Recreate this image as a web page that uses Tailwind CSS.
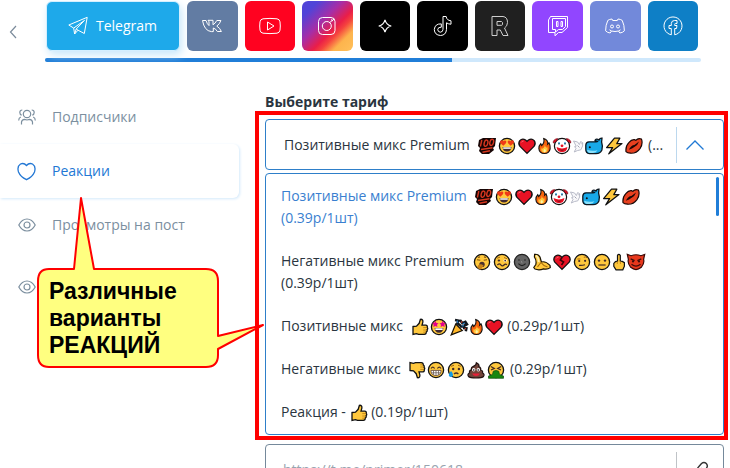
<!DOCTYPE html>
<html lang="ru">
<head>
<meta charset="utf-8">
<meta name="viewport" content="width=device-width, initial-scale=1">
<title>Выбор тарифа</title>
<script src="https://cdn.jsdelivr.net/npm/@tailwindcss/browser@4"></script>
</head>
<body class="h-screen overflow-hidden bg-white font-['Open_Sans','Noto_Sans',sans-serif] text-sm text-[#2a3540]">

<!-- Emoji sprites -->
<svg class="hidden" aria-hidden="true">
  <symbol id="e-100" viewBox="0 0 20 18">
    <path d="M2 3 L6 1 L19 1 L18 9 L16 11 L17 13 L12 17 L5 17 L2 14 L3 11 L1 9 Z" fill="#160505"/>
    <g fill="none" stroke="#d8371f" stroke-width="1.4"><path d="M4.8 3 L3.4 9.5"/><ellipse cx="9" cy="6.2" rx="1.8" ry="3.2" transform="rotate(15 9 6.2)"/><ellipse cx="14.7" cy="5.4" rx="1.8" ry="3.2" transform="rotate(15 14.7 5.4)"/><path d="M4 12.5 L15.5 10.8 M5.5 15.3 L13 13.7"/></g>
  </symbol>
  <symbol id="face" viewBox="0 0 20 18"><circle cx="10" cy="9" r="7.6" fill="#ffc83d" stroke="#111" stroke-width="1.3"/></symbol>
  <symbol id="e-love" viewBox="0 0 20 18">
    <use href="#face"/>
    <path d="M6.3 8.7 L3.2 6 Q2.6 3.6 4.5 3.3 Q5.8 3.1 6.4 4.2 Q7.6 2.8 8.9 3.8 Q9.9 5.2 8.5 6.7 Z M13.7 8.7 L16.8 6 Q17.4 3.6 15.5 3.3 Q14.2 3.1 13.6 4.2 Q12.4 2.8 11.1 3.8 Q10.1 5.2 11.5 6.7 Z" fill="#f03a17"/>
    <path d="M5.5 10 H14.5 Q14 14.6 10 14.6 Q6 14.6 5.5 10 Z" fill="#402a32"/><path d="M6.2 10.3 H13.8 V11.8 H6.2 Z" fill="#fff"/>
  </symbol>
  <symbol id="e-heart" viewBox="0 0 20 18">
    <path d="M10 16.4 L2.8 9.2 Q0.9 6.5 2.8 3.6 Q5.3 0.9 8.6 3 L10 4.4 L11.4 3 Q14.7 0.9 17.2 3.6 Q19.1 6.5 17.2 9.2 Z" fill="#e81224" stroke="#111" stroke-width="1.3"/>
    <path d="M4.2 5.5 Q5 4 6.6 4" fill="none" stroke="#f7707b" stroke-width="1"/>
  </symbol>
  <symbol id="e-broken" viewBox="0 0 20 18">
    <use href="#e-heart"/><path d="M10 4.5 L8.3 7 L11.6 9 L9.5 12" fill="none" stroke="#3a0308" stroke-width="1.5"/>
  </symbol>
  <symbol id="e-fire" viewBox="0 0 16 18">
    <path d="M7.2 1 Q12.2 2.7 11.4 7 L12.8 5.6 Q14.4 8.4 14 12 Q13 17 8 17 Q2.3 16.7 2 11.6 Q2 8.5 4 6.5 L5 8.5 Q8.4 5.5 7.2 1 Z" fill="#f7630c" stroke="#111" stroke-width="1.2"/>
    <path d="M8.4 7.5 Q8.3 9.5 10 10.8 L11 10 Q12.6 15.8 8 16 Q3.5 15.5 4.9 11 L6 12 Q8.5 10.5 8.4 7.5 Z" fill="#ffc83d"/><path d="M8.3 12 Q11 14.8 8 15.8 Q5.7 15 8.3 12 Z" fill="#fff3a8"/>
  </symbol>
  <symbol id="e-clown" viewBox="0 0 20 18">
    <circle cx="10" cy="9" r="7.6" fill="#fff" stroke="#111" stroke-width="1.2"/>
    <path d="M5.5 1.5 Q5 5 1.3 6 Q0.8 2.5 5.5 1.5 Z M14.5 1.5 Q15 5 18.7 6 Q19.2 2.5 14.5 1.5 Z" fill="#e81224" stroke="#701" stroke-width=".7"/>
    <path d="M6 6.3 H8 M12 6.3 H14" stroke="#6cc3ee" stroke-width="2.4"/><path d="M6.5 6.6 H7.5 M12.5 6.6 H13.5" stroke="#222" stroke-width="1.3"/>
    <circle cx="10" cy="8.8" r="1.4" fill="#e81224"/><path d="M4.6 10 Q10 12.8 15.4 10 Q15 15.2 10 15.2 Q5 15.2 4.6 10 Z" fill="#e81224"/><path d="M7 12.3 Q10 13.4 13 12.3 Q10 15 7 12.3" fill="#64101a"/>
  </symbol>
  <symbol id="e-dove" viewBox="0 0 12 18">
    <path d="M1.5 4 L5.6 5 L7.4 7.6 L8.6 4.6 L10.7 5.6 L10.6 9 L8.8 12.8 L5.3 13.6 L2.2 15 L4 11.5 L2.6 9.6 L4.2 9.2 Z" fill="#f8f8fa" stroke="#b9bcc9" stroke-width="1"/><path d="M5.5 8.5 L7.5 10.5 M9.5 6.7 h.8" stroke="#8b8da0" stroke-width=".8"/>
  </symbol>
  <symbol id="e-whale" viewBox="0 0 20 18">
    <path d="M1.8 8 Q2 5 5 4.8 H12 Q13.4 4.8 13.6 4.4 L11 3.6 Q11.3 1.6 14 2.4 L15 3 Q15.8 1 18 1.2 L17.6 5 Q19 9 17.9 13 Q16.3 16.7 12 16.7 H5.5 Q1.6 16.3 1.8 12 Z" fill="#18a9e8" stroke="#0c1720" stroke-width="1.3"/>
    <path d="M3 12.8 Q8 14.6 13.5 13.2 Q12 15.8 9 15.9 H5.7 Q3.5 15.6 3 12.8 Z" fill="#8be0fa"/><circle cx="5.8" cy="10.2" r="1" fill="#111"/>
  </symbol>
  <symbol id="e-bolt" viewBox="0 0 20 18">
    <path d="M10.5 1.2 H15.8 L12.8 6.6 H18 L4.8 16.8 L8.6 10.6 H2.6 Z" fill="#ffc83d" stroke="#111" stroke-width="1.3" stroke-linejoin="round"/>
  </symbol>
  <symbol id="e-lips" viewBox="0 0 20 18">
    <path d="M2 14.7 Q1.4 9 4.8 5.6 Q7.5 2.3 10.4 2.6 L11.8 3.3 Q14 0.7 17.4 2 Q19.2 6.5 16.2 11.3 Q12.4 16.6 6.5 16.2 Q3.3 16.2 2 14.7 Z" fill="#e8401f" stroke="#190806" stroke-width="1.2"/>
    <path d="M4.8 12.8 Q7.3 8.2 10.4 8 L15 4.6 Q13.6 8.7 10.7 9.8 Q8.3 12 4.8 12.8 Z" fill="#1c0705"/>
  </symbol>
  <symbol id="e-yawn" viewBox="0 0 20 18">
    <use href="#face"/><path d="M5 6.8 L8.3 7.3 M11.7 7.3 L15 6.8 M5.8 4.5 L8 3.9 M12 3.9 L14.2 4.5" stroke="#80500f" stroke-width="1.1"/><circle cx="10" cy="11.4" r="2.7" fill="#4a302d"/><path d="M5.3 14.2 Q6.2 10.5 9.2 11.3 L11.6 12.3 L9 16.5 L6.8 15.9 Z" fill="#c88218"/>
  </symbol>
  <symbol id="e-woozy" viewBox="0 0 20 18">
    <use href="#face"/><path d="M5 5.2 L8 4.2 M12 4.5 L15 5.7" stroke="#a86d12"/><ellipse cx="6.9" cy="7.6" rx="1.3" ry="1" fill="#442b24"/><ellipse cx="13.2" cy="7.6" rx="1.7" ry="1.2" fill="#fff"/><circle cx="13.2" cy="7.6" r=".9" fill="#442b24"/><path d="M5.4 12 Q7.2 9.8 8.8 11.8 T12 12 T14.8 11.8" fill="none" stroke="#442b24" stroke-width="1.3"/>
  </symbol>
  <symbol id="e-moon" viewBox="0 0 20 18">
    <circle cx="10" cy="9" r="7.6" fill="#656565" stroke="#222" stroke-width="1.3"/><path d="M7 6.3 v1.5 M13 6.3 v1.5 M6.4 10.7 Q10 14.5 13.6 10.7" fill="none" stroke="#222" stroke-width="1.2"/><path d="M9.5 8 Q9 10 10.5 9.8" fill="none" stroke="#888"/>
  </symbol>
  <symbol id="e-banana" viewBox="0 0 20 18">
    <path d="M2.6 1.4 Q6.4 1 8 4 L9.4 9 Q13.5 7.8 18 12.4 L18.3 14.6 Q15.5 16.8 11.6 15.9 Q6.8 17.6 3 16 L1.8 14.5 L3.8 11.5 Q4.8 7.5 2.4 4 Z" fill="#ffc83d" stroke="#1b1302" stroke-width="1.2"/><path d="M4 2.5 Q6.2 3.5 6.8 9" fill="none" stroke="#fff1b0" stroke-width="1.8"/><path d="M9 9.5 L5.5 13.8 M9 9.5 Q11 12.5 15.5 14" fill="none" stroke="#a86c08" stroke-width="1.1"/>
  </symbol>
  <symbol id="e-brow" viewBox="0 0 20 18">
    <use href="#face"/><path d="M5.4 6 H8.4 M11.8 4.3 Q13.5 3.3 15 4.8" fill="none" stroke="#a16312"/><circle cx="7.2" cy="8" r="1.1" fill="#442b24"/><circle cx="13.1" cy="7.8" r="1.1" fill="#442b24"/><path d="M7 12.4 Q10 12.7 13 11.8" fill="none" stroke="#442b24" stroke-width="1.2"/>
  </symbol>
  <symbol id="e-neutral" viewBox="0 0 20 18">
    <use href="#face"/><circle cx="7" cy="7.6" r="1.2" fill="#442b24"/><circle cx="13" cy="7.6" r="1.2" fill="#442b24"/><path d="M6.4 12 H13.6" stroke="#442b24" stroke-width="1.2"/>
  </symbol>
  <symbol id="e-finger" viewBox="0 0 14 18">
    <path d="M5.5 8 V2.4 Q6.8 0.4 8.3 2.4 V8 L10.3 8.4 L12.4 9.7 V13.2 L10.8 16.8 H4 L1.8 13.3 V10.4 L3.5 8.6 Z" fill="#ffc83d" stroke="#111" stroke-width="1.2"/><path d="M5.3 8.4 V11 M8.4 8.4 V11" stroke="#b77a12" stroke-width=".8"/>
  </symbol>
  <symbol id="e-devil" viewBox="0 0 20 18">
    <path d="M1.3 1.4 L5 2.7 Q10 0.8 15 2.7 L18.7 1.4 L17.6 6.3 Q18.7 10.5 15.3 14.3 Q10 18.8 4.7 14.3 Q1.3 10.5 2.4 6.3 Z" fill="#e8381c" stroke="#3a0907" stroke-width="1.2"/><path d="M4.7 5.9 L8.6 7.7 M15.3 5.9 L11.4 7.7 M5.5 11.3 Q10 14.8 14.5 11.3" fill="none" stroke="#400d0a" stroke-width="1.3"/><circle cx="7" cy="8.4" r="1.1" fill="#400d0a"/><circle cx="13" cy="8.4" r="1.1" fill="#400d0a"/>
  </symbol>
  <symbol id="e-up" viewBox="0 0 18 18">
    <path d="M2 8.5 L5.5 8.2 L8.2 5.3 L9.4 1.3 Q12.3 1 11.8 4.3 L11 7.2 H15 Q16.7 7.6 16.2 9.3 Q17.3 10.6 16 11.7 Q16.7 13.2 15.3 14 Q15.3 16.2 13.3 16.3 H7.5 L5.5 15.6 L2 16.4 Z" fill="#ffc83d" stroke="#111" stroke-width="1.3"/><path d="M12.3 9.6 H16 M12.3 12 H15.6 M12.3 14.2 H15" stroke="#b77a12" stroke-width=".8"/>
  </symbol>
  <symbol id="e-down" viewBox="0 0 18 18"><use href="#e-up" transform="translate(0 18) scale(1 -1)"/></symbol>
  <symbol id="e-star" viewBox="0 0 20 18">
    <use href="#face"/><path d="M6.5 2.8 L7.4 4.9 L9.6 5.2 L8 6.7 L8.4 9 L6.4 7.9 L4.3 8.9 L4.7 6.7 L3.1 5 L5.4 4.8 Z M13.5 2.8 L14.6 4.8 L16.9 5 L15.3 6.7 L15.7 8.9 L13.6 7.9 L11.6 9 L12 6.7 L10.4 5.2 L12.6 4.9 Z" fill="#e3008c"/><path d="M5.6 10 H14.4 Q14 14.8 10 14.8 Q6 14.8 5.6 10 Z" fill="#402a32"/><path d="M6.3 10.3 H13.7 V12 H6.3 Z" fill="#fff"/>
  </symbol>
  <symbol id="e-party" viewBox="0 0 20 18">
    <path d="M6.7 6 L13.3 12.5 L2.2 16.9 Z" fill="#ffb72a" stroke="#171005" stroke-width="1.2"/><path d="M6 2 L9.5 2.6 L8.4 5.3 L11.6 7.8 M11 2 L13.4 5.2 L16.4 3.8 L18 6.2 L14.4 8.2 L11 8.4 M14 10 L17.4 10.3 L16.8 13.2" fill="none" stroke="#10151c" stroke-width="2.5"/><path d="M8 2.6 L9 5 M13.7 5.7 L16 5 M12.8 8 L15 7.6" stroke="#2376bd" stroke-width="1.2"/><path d="M12.3 3.4 L13 4.6 M15.7 10.4 L17 11" stroke="#d93b24" stroke-width="1.2"/>
  </symbol>
  <symbol id="e-grin" viewBox="0 0 20 18">
    <use href="#face"/><path d="M5 7.5 Q6.8 4.8 8.6 7.5 M11.4 7.5 Q13.2 4.8 15 7.5" fill="none" stroke="#442b24" stroke-width="1.2"/><path d="M4.9 9.4 H15.1 Q15 14.5 10 14.5 Q5 14.5 4.9 9.4 Z" fill="#fff" stroke="#5a4038" stroke-width=".8"/><path d="M5 11.8 H15 M7.5 9.4 V13.9 M10 9.4 V14.5 M12.5 9.4 V13.9" stroke="#6b5a56" stroke-width=".8"/>
  </symbol>
  <symbol id="e-cry" viewBox="0 0 20 18">
    <use href="#face"/><path d="M5 5.3 L8 4.3 M12 4.3 L15 5.3" stroke="#a16312"/><circle cx="7.2" cy="8" r="1.2" fill="#442b24"/><circle cx="12.9" cy="8" r="1.2" fill="#442b24"/><path d="M8 13 Q10.2 11 12.4 13" fill="none" stroke="#442b24" stroke-width="1.2"/><path d="M5 10 Q8 13.3 6.5 15.3 Q4.6 16.7 3 15 Q2.2 13 5 10 Z" fill="#139be3"/>
  </symbol>
  <symbol id="e-poop" viewBox="0 0 20 18">
    <path d="M10.4 1.8 Q13.7 3.3 12.8 5.5 Q15.3 6.6 14.6 9 Q17.2 9.6 16.5 12 Q19 13.3 17.5 15.5 Q16 17 10 17 Q4 17 2.5 15.5 Q1 13.3 3.5 12 Q3 9.4 5.4 8.8 Q5 6.4 7.4 5.4 Q10.4 4.4 10.4 1.8 Z" fill="#724339" stroke="#211211" stroke-width="1.2"/><circle cx="7.7" cy="8.8" r="1.7" fill="#fff"/><circle cx="12.3" cy="8.8" r="1.7" fill="#fff"/><circle cx="7.8" cy="9" r=".8"/><circle cx="12.2" cy="9" r=".8"/><path d="M6 12.4 H14 Q12.7 15 10 15 Q7.3 15 6 12.4 Z" fill="#e81f39"/>
  </symbol>
  <symbol id="e-vomit" viewBox="0 0 20 18">
    <use href="#face"/><path d="M4.8 5.4 L8.4 7.4 L5 9 M15.2 5.4 L11.6 7.4 L15 9" fill="none" stroke="#442b24" stroke-width="1.2"/><path d="M7.3 10.2 Q10 8.8 12.7 10.2 L13.5 13.4 L17.5 15 V17.3 H2.5 V15 L6.5 13.4 Z" fill="#16870f" stroke="#0c4c0a" stroke-width=".7"/>
  </symbol>
  <symbol id="i-eye" viewBox="0 0 18 14">
    <path d="M.8 7 Q4 1 9 1 T17.2 7 Q14 13 9 13 T.8 7 Z" fill="none" stroke="currentColor" stroke-width="1.2"/><circle cx="9" cy="7" r="3" fill="none" stroke="currentColor" stroke-width="1.2"/>
  </symbol>
</svg>

<header class="flex items-start pr-[29px]">
  <button type="button" aria-label="Назад" class="mt-[24px] flex w-[45px] shrink-0 pl-2">
    <svg class="h-4 w-2.5" viewBox="0 0 10 16" fill="none" stroke="#7b8b9b" stroke-width="1.2"><path d="M8 2 L2.5 8 L8 14"/></svg>
  </button>
  <div class="min-w-0 grow">
    <nav aria-label="Социальные сети" class="flex gap-[7px] pt-px pr-[3px] pl-px text-white">
      <a href="#" class="flex h-[50px] w-[134px] items-center gap-2 rounded-md border border-[#d3efff] bg-[#1ea9ea] pl-[21px] shadow-[2px_4px_8px_#c9e8fb]">
        <svg class="h-5 w-5 shrink-0" viewBox="0 0 20 20" fill="none" stroke="#fff" stroke-width="1"><path d="M.8 9 L19.2 1.3 L16.3 17.5 L10 14.2 L6.6 18 L5.7 12.1 Z M5.7 12.1 L16.5 4.4 L8.2 13 L6.6 18 M8.2 13 L10 14.2"/></svg>
        <span>Telegram</span>
      </a>
      <a href="#" aria-label="ВКонтакте" class="flex h-[50px] flex-1 items-center justify-center rounded-md bg-[#627ca3]">
        <svg class="h-5 w-5" viewBox="0 0 20 20" fill="none" stroke="#fff" stroke-width="1" stroke-linejoin="round"><path d="M.5 4.5 H4 Q5.3 8.4 7 9.6 V5.8 L6 4.3 H11 V8.8 Q13.3 7.4 14.8 4.5 H18.9 Q17.8 8 14.8 10.1 Q18.2 12.2 19.4 15.5 H15.3 Q14 12.8 11.3 12 V15.6 H9.3 Q2.3 14.8 .5 4.5 Z"/></svg>
      </a>
      <a href="#" aria-label="YouTube" class="flex h-[50px] flex-1 items-center justify-center rounded-md bg-[#ff0220]">
        <svg class="h-[22px] w-[22px]" viewBox="0 0 22 22" fill="none" stroke="#fff" stroke-width="1"><path d="M4 3.8 Q11 3 18 3.8 Q20.6 4.2 21 6.8 Q21.6 11 21 15.2 Q20.6 17.8 18 18.2 Q11 19 4 18.2 Q1.4 17.8 1 15.2 Q.4 11 1 6.8 Q1.4 4.2 4 3.8 Z M8.5 7 L15 11 L8.5 15 Z"/></svg>
      </a>
      <a href="#" aria-label="Instagram" class="flex h-[50px] flex-1 items-center justify-center rounded-md bg-[linear-gradient(135deg,#5044d8_16%,#a52ea8_40%,#ea1e48_59%,#f5433e_67%,#fdb44d_80%,#ffc05a_100%)]">
        <svg class="h-5 w-5" viewBox="0 0 20 20" fill="none" stroke="#fff" stroke-width="1"><rect x="1.5" y="1.5" width="16.5" height="17" rx="4"/><circle cx="9.8" cy="10" r="4.5"/><path d="M12.8 6.5 L17 3 M14 3.5 L16 5"/></svg>
      </a>
      <a href="#" aria-label="Дзен" class="flex h-[50px] flex-1 items-center justify-center rounded-md bg-black">
        <svg class="h-4 w-4" viewBox="0 0 16 16" fill="none" stroke="#fff" stroke-width="1.2"><path d="M8 1.8 Q9.2 6.8 14.2 8 Q9.2 9.2 8 14.2 Q6.8 9.2 1.8 8 Q6.8 6.8 8 1.8 Z"/></svg>
      </a>
      <a href="#" aria-label="TikTok" class="flex h-[50px] flex-1 items-center justify-center rounded-md bg-black">
        <svg class="h-[22px] w-5" viewBox="0 0 20 22" fill="none" stroke="#fff" stroke-width="1"><path d="M10 1.5 H13.2 Q13.5 5.3 18 5.8 V9.2 Q15.5 9.2 13.5 7.8 V14.5 Q13 20.3 7.5 20.5 Q1.5 20 1.3 14.5 Q2 8.5 8.3 8.9 V12.2 Q4.8 12 4.7 14.7 Q5 17 7.3 17.2 Q10 17 10 14.3 Z"/></svg>
      </a>
      <a href="#" aria-label="Rutube" class="flex h-[50px] flex-1 items-center justify-center rounded-md bg-[#202020]">
        <svg class="h-[22px] w-[18px]" viewBox="0 0 18 22" fill="none" stroke="#cfcfcf" stroke-width="1"><path d="M1 1.5 H12 Q16.5 2 16.5 7.5 Q16.3 11.5 13.5 13 L17 20.5 H12 L9.3 15 H6 V20.5 H1 Z M6 6.5 H10.5 Q12 7 11.5 9.5 Q11.3 10.3 10.5 10.3 H6 Z"/></svg>
      </a>
      <a href="#" aria-label="Twitch" class="flex h-[50px] flex-1 items-center justify-center rounded-md bg-[#9146ff]">
        <svg class="h-[22px] w-[22px]" viewBox="0 0 22 22" fill="none" stroke="#fff" stroke-width="1"><path d="M3.5 1.5 H20.5 V12.5 L15 17.5 H11.5 L8 20.8 V17.5 H1.5 V5 Z M5.5 3.5 H18.5 V11.5 L15.5 14.5 H11.5 L8.5 17 V14.5 H5.5 Z M9.5 6.5 h1.5 v5 h-1.5 Z M14 6.5 h1.5 v5 h-1.5 Z"/></svg>
      </a>
      <a href="#" aria-label="Discord" class="flex h-[50px] flex-1 items-center justify-center rounded-md bg-[#7289da]">
        <svg class="h-5 w-5" viewBox="0 0 20 20" fill="none" stroke="#fff" stroke-width="1"><path d="M7 3 Q4.5 3.2 2.8 4.4 Q.6 9 .6 14.8 Q2.5 16.8 5.2 17 L6.5 15 Q10 16 13.5 15 L14.8 17 Q17.5 16.8 19.4 14.8 Q19.4 9 17.2 4.4 Q15.5 3.2 13 3 L12.3 4.5 H7.7 Z M4.5 13.8 L6.5 15 M15.5 13.8 L13.5 15"/><circle cx="7" cy="10.5" r="1.5"/><circle cx="13" cy="10.5" r="1.5"/></svg>
      </a>
      <a href="#" aria-label="Facebook" class="flex h-[50px] flex-1 items-center justify-center rounded-md bg-[#0e7fc6]">
        <svg class="h-5 w-5" viewBox="0 0 20 20" fill="none" stroke="#fff" stroke-width="1"><path d="M8.3 18.8 A9 9 0 1 1 11.7 18.8 M8.3 18.8 V12.5 H6 V9.5 H8.3 V7.5 Q8.5 4.5 11.5 4.5 H14 V7.5 H12.5 Q11.7 7.5 11.7 8.5 V9.5 H14 L13.5 12.5 H11.7 V18.8"/></svg>
      </a>
    </nav>
    <div class="mt-[7px] h-1 overflow-hidden rounded-full bg-[#cfe8fc]"><div class="h-full w-[62%] bg-[#207ed8]"></div></div>
  </div>
</header>

<main class="flex gap-[26px] pr-[6px]">
  <nav aria-label="Категории" class="relative mt-[28px] w-[239px] shrink-0 text-[#7c8f9f]">
    <a href="#" class="flex h-[54px] items-center gap-4 pl-[18px]">
      <svg class="h-[18px] w-[18px]" viewBox="0 0 18 18" fill="none" stroke="currentColor" stroke-width="1.2"><circle cx="9" cy="6" r="3.7"/><path d="M3.5 16.5 V14 Q3.8 11.5 6.5 11.3 L9 12 L11.5 11.3 Q14.2 11.5 14.5 14 V16.5 M4.3 2 Q1.8 2 1.8 4.5 Q1.8 6.5 3.7 7.3 M13.7 2 Q16.2 2 16.2 4.5 Q16.2 6.5 14.3 7.3 M2.8 9 Q.7 9.8 .7 12.5 M15.2 9 Q17.3 9.8 17.3 12.5"/></svg>
      <span>Подписчики</span>
    </a>
    <a href="#" aria-current="page" class="flex h-[54px] items-center gap-4 rounded-r-md bg-white pl-[17px] text-[#2277d4] shadow-[1px_1px_3px_#d3e9fb]">
      <svg class="h-[19px] w-[19px]" viewBox="0 0 19 19" fill="none" stroke="currentColor" stroke-width="1.3"><path d="M9.5 17.7 Q3.5 14.8 1.5 10 Q-.2 4.5 3.5 2 Q7 .5 9.5 3.5 Q12 .5 15.5 2 Q19.2 4.5 17.5 10 Q15.5 14.8 9.5 17.7 Z"/></svg>
      <span>Реакции</span>
    </a>
    <a href="#" class="flex h-[54px] items-center gap-4 pl-[18px]">
      <svg class="h-[14px] w-[18px]"><use href="#i-eye"/></svg>
      <span>Просмотры на пост</span>
    </a>
    <a href="#" aria-label="Просмотры" class="flex h-[70px] items-center pl-[18px]">
      <svg class="h-[14px] w-[18px]"><use href="#i-eye"/></svg>
    </a>
    <!-- Callout bubble -->
    <div class="absolute top-[106px] left-[36px] z-20 h-[175px] w-[230px]">
      <svg class="absolute inset-0 h-full w-full" viewBox="0 0 230 175" fill="#ffff80" stroke="#f00" stroke-width="2" stroke-linejoin="round"><path d="M13 73 H38 L45 2 L58 73 H170 Q182 73 182 85 V140 L227 129 L182 153 V159 Q182 171 170 171 H13 Q2 171 2 159 V85 Q2 73 13 73 Z"/></svg>
      <p class="relative pt-[82px] pl-[13px] font-['Liberation_Sans',Arial,sans-serif] text-[23px] leading-[27px] font-bold text-black">Различные<br>варианты<br>РЕАКЦИЙ</p>
    </div>
  </nav>

  <form class="min-w-0 grow pt-[29px]">
    <p id="tariff-label" class="leading-[22px] font-bold">Выберите тариф</p>
    <div class="relative mt-[6px]">
      <button type="button" aria-haspopup="listbox" aria-expanded="true" aria-labelledby="tariff-label" class="flex h-[51px] w-full items-center rounded border border-[#2e7fc9] bg-white pl-[18px] text-left">
        <span class="min-w-0 grow leading-[22px] whitespace-nowrap">Позитивные микс Premium <svg class="ml-1 inline-block h-[18px] w-5 align-middle"><use href="#e-100"/></svg><svg class="inline-block h-[18px] w-5 align-middle"><use href="#e-love"/></svg><svg class="inline-block h-[18px] w-5 align-middle"><use href="#e-heart"/></svg><svg class="inline-block h-[18px] w-[15px] align-middle"><use href="#e-fire"/></svg><svg class="inline-block h-[18px] w-5 align-middle"><use href="#e-clown"/></svg><svg class="inline-block h-[18px] w-3 align-middle"><use href="#e-dove"/></svg><svg class="inline-block h-[18px] w-5 align-middle"><use href="#e-whale"/></svg><svg class="inline-block h-[18px] w-5 align-middle"><use href="#e-bolt"/></svg><svg class="inline-block h-[18px] w-5 align-middle"><use href="#e-lips"/></svg> (...</span>
        <span class="flex h-9 w-[47px] shrink-0 items-center border-l border-[#bcd8ee] pl-[9px]">
          <svg class="h-3 w-[18px]" viewBox="0 0 18 12" fill="none" stroke="#2079d4" stroke-width="1.3"><path d="M.5 10.5 L9 2 L17.5 10.5"/></svg>
        </span>
      </button>
      <div class="relative mt-[3px] h-[262px] overflow-hidden rounded border border-[#2e7fc9] bg-white">
        <ul role="listbox" aria-labelledby="tariff-label" class="leading-[22px]">
          <li role="option" aria-selected="true" class="px-[15px] pt-[11px] pb-[10px] text-[#3a7fd0]">Позитивные микс Premium <svg class="ml-1 inline-block h-[18px] w-5 align-middle"><use href="#e-100"/></svg><svg class="inline-block h-[18px] w-5 align-middle"><use href="#e-love"/></svg><svg class="inline-block h-[18px] w-5 align-middle"><use href="#e-heart"/></svg><svg class="inline-block h-[18px] w-[15px] align-middle"><use href="#e-fire"/></svg><svg class="inline-block h-[18px] w-5 align-middle"><use href="#e-clown"/></svg><svg class="inline-block h-[18px] w-3 align-middle"><use href="#e-dove"/></svg><svg class="inline-block h-[18px] w-5 align-middle"><use href="#e-whale"/></svg><svg class="inline-block h-[18px] w-5 align-middle"><use href="#e-bolt"/></svg><svg class="inline-block h-[18px] w-5 align-middle"><use href="#e-lips"/></svg> (0.39р/1шт)</li>
          <li role="option" class="px-[15px] pt-[11px] pb-[10px]">Негативные микс Premium <svg class="ml-1 inline-block h-[18px] w-5 align-middle"><use href="#e-yawn"/></svg><svg class="inline-block h-[18px] w-5 align-middle"><use href="#e-woozy"/></svg><svg class="inline-block h-[18px] w-5 align-middle"><use href="#e-moon"/></svg><svg class="inline-block h-[18px] w-5 align-middle"><use href="#e-banana"/></svg><svg class="inline-block h-[18px] w-5 align-middle"><use href="#e-broken"/></svg><svg class="inline-block h-[18px] w-5 align-middle"><use href="#e-brow"/></svg><svg class="inline-block h-[18px] w-5 align-middle"><use href="#e-neutral"/></svg><svg class="inline-block h-[18px] w-3.5 align-middle"><use href="#e-finger"/></svg><svg class="inline-block h-[18px] w-5 align-middle"><use href="#e-devil"/></svg> (0.39р/1шт)</li>
          <li role="option" class="px-[15px] pt-[11px] pb-[10px]">Позитивные микс <svg class="ml-1 inline-block h-[18px] w-[18px] align-middle"><use href="#e-up"/></svg><svg class="inline-block h-[18px] w-5 align-middle"><use href="#e-star"/></svg><svg class="inline-block h-[18px] w-5 align-middle"><use href="#e-party"/></svg><svg class="inline-block h-[18px] w-[15px] align-middle"><use href="#e-fire"/></svg><svg class="inline-block h-[18px] w-5 align-middle"><use href="#e-heart"/></svg> (0.29р/1шт)</li>
          <li role="option" class="px-[15px] pt-[11px] pb-[10px]">Негативные микс <svg class="ml-1 inline-block h-[18px] w-[18px] align-middle"><use href="#e-down"/></svg><svg class="inline-block h-[18px] w-5 align-middle"><use href="#e-grin"/></svg><svg class="inline-block h-[18px] w-5 align-middle"><use href="#e-cry"/></svg><svg class="inline-block h-[18px] w-5 align-middle"><use href="#e-poop"/></svg><svg class="inline-block h-[18px] w-5 align-middle"><use href="#e-vomit"/></svg> (0.29р/1шт)</li>
          <li role="option" class="px-[15px] pt-[11px] pb-[10px]">Реакция - <svg class="inline-block h-[18px] w-[18px] align-middle"><use href="#e-up"/></svg> (0.19р/1шт)</li>
        </ul>
        <div class="absolute top-[3px] right-1 h-[39px] w-[3px] rounded-full bg-[#207ed8]"></div>
      </div>
      <!-- Highlight frame -->
      <div class="pointer-events-none absolute -top-2 -right-1 -bottom-[5px] -left-[10px] border-4 border-[#f00]"></div>
    </div>
    <div class="mt-[9px] flex h-[51px] items-center rounded border border-[#75899b] bg-white pl-[17px]">
      <input type="url" aria-label="Ссылка на пост" placeholder="https://t.me/primer/150618" class="min-w-0 grow leading-[22px] outline-none placeholder:text-[#98a4af]">
      <span class="flex h-9 w-[47px] shrink-0 items-center border-l border-[#bfc3c7] pl-[14px]">
        <svg class="h-[18px] w-[18px]" viewBox="0 0 18 18" fill="none" stroke="#333" stroke-width="1.4" stroke-linecap="round"><path d="M7.5 10.5 Q5.5 8 7.5 6 L10.5 2.5 Q13 .3 15.3 2.5 Q17.4 5 15.3 7.2 L12.5 10 M10.5 7.5 Q12.5 10 10.5 12 L7.5 15.3 Q5 17.5 2.7 15.3 Q.6 13 2.7 10.7 L5 8.5"/></svg>
      </span>
    </div>
  </form>
</main>
</body>
</html>
